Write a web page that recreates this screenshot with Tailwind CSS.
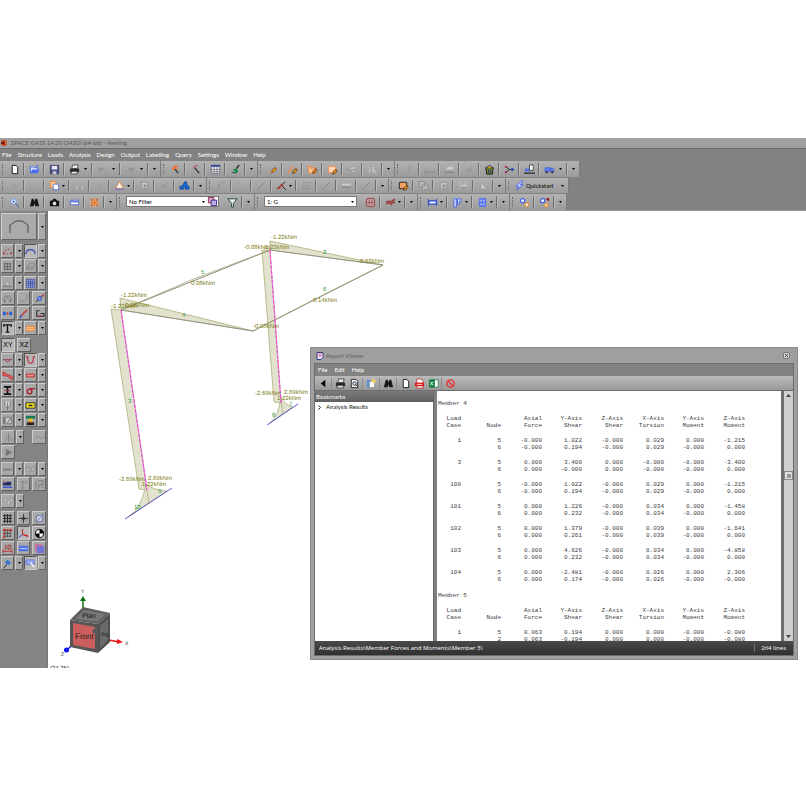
<!DOCTYPE html>
<html lang="en">
<head>
    <meta charset="UTF-8">
    <meta name="viewport" content="width=device-width, initial-scale=1.0">
    <title>SPACE GASS 14.20 - Awning</title>
    <script src="https://cdn.jsdelivr.net/npm/@tailwindcss/browser@4"></script>
</head>
<body class="bg-white h-screen py-[138px] font-['Lato','Noto_Sans',sans-serif] text-[6px] leading-[8px] text-black">

<div class="flex flex-col h-full relative overflow-hidden bg-[#828282]">
    <!-- Title bar -->
    <header class="flex items-center h-[11px] shrink-0 bg-[#a0a0a0] border-b border-[#6c6c6c] text-[#5c5c5c]">
        <svg class="w-[8px] h-[8px] mr-[3px]" viewBox="0 0 8 8"><circle cx="4" cy="4" r="3" fill="#c43c14"/><path d="M1 3h4v2H1z" fill="#7c1d0c"/><path d="M5 2l2 2-2 1z" fill="#f08b50"/></svg>
        <h1>SPACE GASS 14.20 (3420) (64-bit) - Awning</h1>
    </header>

    <!-- Menu -->
    <nav class="flex items-center gap-[6px] h-[12px] shrink-0 px-[2px] text-white">
        <button>File</button>
        <button>Structure</button>
        <button>Loads</button>
        <button>Analysis</button>
        <button>Design</button>
        <button>Output</button>
        <button>Labelling</button>
        <button>Query</button>
        <button>Settings</button>
        <button>Window</button>
        <button>Help</button>
    </nav>

    <!-- Toolbars -->
    <div class="flex flex-col items-start shrink-0 gap-px border-b border-[#999]">
        <div id="bar1" role="toolbar" aria-label="File and structure" class="flex h-[16px] bg-linear-to-b from-[#b2b2b2] to-[#9b9b9b]"></div>
        <div id="bar2" role="toolbar" aria-label="Edit" class="flex h-[15px] bg-linear-to-b from-[#b2b2b2] to-[#9b9b9b]"></div>
        <div id="bar3" role="toolbar" aria-label="View and filter" class="flex h-[16px] bg-linear-to-b from-[#b2b2b2] to-[#9b9b9b]"></div>
    </div>

    <main class="flex flex-1 min-h-0">
        <!-- Tool palette -->
        <aside class="w-[48px] shrink-0 bg-[#848484] border-r border-[#777] px-px pt-[2px]">
            <div class="flex gap-px mb-[4px]">
                <button aria-label="Portal frame" class="flex items-center justify-center w-[36px] h-[27px] bg-[#aaa] border border-t-[#d0d0d0] border-l-[#d0d0d0] border-r-[#666] border-b-[#666]">
                    <svg class="w-[20px] h-[14px]" viewBox="0 0 20 14"><path d="M1 13V5l6-4h6l6 4v8" fill="none" stroke="#4a4a4a"/></svg>
                </button>
                <button aria-label="More shapes" class="flex items-center justify-center w-[8px] h-[27px] bg-[#aaa] border border-t-[#d0d0d0] border-l-[#d0d0d0] border-r-[#666] border-b-[#666]">
                    <svg class="w-[3px] h-[2px]" viewBox="0 0 3 2"><path d="M0 0h3L1.500 2z"/></svg>
                </button>
            </div>
            <div id="palette"></div>
        </aside>

        <!-- Model view -->
        <section class="relative flex-1 min-w-0 bg-white overflow-hidden" aria-label="Model view">
            <svg class="block w-[354px] h-[457px] font-['Liberation_Sans',sans-serif]" viewBox="48 211 354 457" text-rendering="geometricPrecision">
                <!-- moment diagrams -->
                <g fill="#e2e2cf" stroke="#a5a56c" stroke-width=".7">
                    <path d="M262 250h8l11 153-7-1z"/>
                    <path d="M270 250v-9l113 24z"/>
                    <path d="M111 309l10 1 26 180-8-1z"/>
                    <path d="M121 310l-1-12 133 33z"/>
                    <path d="M281 397q-2 18-11 26l23-16q-8-2-12-10z"/>
                    <path d="M146 484q-4 24-18 33l39-26q-14-1-21-7z"/>
                    <path d="M281 400l2 14M146 486l3 17"/>
                </g>
                <!-- members -->
                <g fill="none" stroke="#8a8a86" stroke-width=".8">
                    <path d="M121 310l132 21M270 250l113 15"/>
                    <path d="M121 310l149-60M383 265l-130 66" stroke="#6c6c54"/>
                    <path d="M121 310l75-32 74-28M253 331l66-34 64-32" stroke="#a0a070" stroke-width=".7"/>
                </g>
                <path d="M121 310l26 180M270 250l11 153" stroke="#f04ae0" stroke-width="1.200" stroke-dasharray="4 1"/>
                <path d="M125 519l47-31M267 425l31-21" stroke="#4a4ad0" stroke-width=".9"/>
                <!-- values -->
                <g font-size="6" fill="#7c7c10">
                    <text x="271" y="239">-1.22kNm</text>
                    <text x="244" y="249">-0.08kNm</text>
                    <text x="263" y="249">-1.22kNm</text>
                    <text x="358" y="263">-0.03kNm</text>
                    <text x="191" y="285">0.08kNm</text>
                    <text x="313" y="302">0.14kNm</text>
                    <text x="121" y="297">-1.22kNm</text>
                    <text x="111" y="308">-1.22kNm</text>
                    <text x="125" y="307">0.08kNm</text>
                    <text x="253" y="328">-0.03kNm</text>
                    <text x="255" y="395">-2.69kNm</text>
                    <text x="284" y="394">2.69kNm</text>
                    <text x="277" y="400">1.22kNm</text>
                    <text x="119" y="481">-2.69kNm</text>
                    <text x="148" y="480">2.69kNm</text>
                    <text x="142" y="486">1.22kNm</text>
                </g>
                <!-- member numbers -->
                <g font-size="6" fill="#1c9440">
                    <text x="323" y="254">2</text>
                    <text x="201" y="274">5</text>
                    <text x="323" y="291">6</text>
                    <text x="182" y="317">4</text>
                    <text x="128" y="403">3</text>
                    <text x="289" y="406">7</text>
                    <text x="272" y="417">8</text>
                    <text x="158" y="493">9</text>
                    <text x="134" y="509">10</text>
                </g>
                <!-- view cube -->
                <path d="M83 608v-8" stroke="#107010" stroke-width="1.500"/><path d="M80 601l3-5 3 5z" fill="#107010"/>
                <path d="M109 640l10 2" stroke="#f01010" stroke-width="1.500"/><path d="M117 639l6 3-6 2z" fill="#f01010"/>
                <path d="M71 646l-4 4" stroke="#1010f0" stroke-width="1.500"/><circle cx="66.500" cy="650" r="2.500" fill="#1010f0"/>
                <path d="M70 620l28 4v29l-28-6z" fill="#555"/>
                <path d="M70 620l13-13 27 6-12 11z" fill="#5e5e5e"/>
                <path d="M98 624l12-11v29l-12 11z" fill="#505050"/>
                <path d="M75 619l9-9 22 4-9 8z" fill="#777"/>
                <path d="M100 626l8-7v21l-8 8z" fill="#6a6a6a"/>
                <path d="M73 623l22 4v22l-22-4z" fill="#cb5f5f"/>
                <circle cx="95" cy="631" r="2.500" fill="#555" stroke="#777" stroke-width=".5"/>
                <text x="75" y="639" font-size="8" fill="#1c1c1c">Front</text>
                <text x="82" y="618" font-size="7" fill="#1c1c1c">Plan</text>
                <text x="101" y="636" font-size="5" fill="#1c1c1c">Rig</text>
                <g font-size="5" fill="#222">
                    <text x="81" y="593">Y</text>
                    <text x="125" y="645">X</text>
                    <text x="61" y="656">Z</text>
                </g>
                <text x="50" y="670" font-size="6" fill="#222">(24,25)</text>
            </svg>
        </section>
    </main>

    <!-- Report viewer window -->
    <section aria-label="Report Viewer" class="absolute left-[310px] right-[8px] top-[209px] bottom-[8px] flex flex-col bg-[#9f9f9f] border border-[#8a8a8a] px-[3px] pb-[3px]">
        <div class="flex items-center justify-between h-[15px] shrink-0 px-[2px] text-[#666]">
            <div class="flex items-center gap-[2px]">
                <svg class="w-[8px] h-[8px]" viewBox="0 0 8 8"><path d="M1 .5h6v5l-2 2H1z" fill="#e4e4fa" stroke="#3c3c78"/><path d="M2.500 2h3M2.500 4h3" stroke="#d65a80"/></svg>
                <h2>Report Viewer</h2>
            </div>
            <button aria-label="Close" class="mr-[2px]">
                <svg class="w-[7px] h-[7px]" viewBox="0 0 7 7"><rect x=".5" y=".5" width="6" height="6" rx="1.500" fill="#ddd" stroke="#777"/><path d="M2 2l3 3M5 2L2 5" stroke="#333"/></svg>
            </button>
        </div>
        <div class="flex flex-col flex-1 min-h-0 border border-[#6c6c6c]">
            <nav class="flex items-center gap-[7px] h-[12px] shrink-0 px-[3px] bg-[#828282] text-white">
                <button>File</button>
                <button>Edit</button>
                <button>Help</button>
            </nav>
            <div id="reportBar" role="toolbar" aria-label="Report" class="flex items-center h-[15px] shrink-0 px-px bg-linear-to-b from-[#bababa] to-[#999] border-b border-[#6c6c6c]"></div>
            <div class="flex flex-1 min-h-0">
                <div class="flex flex-col w-[118px] shrink-0 bg-white">
                    <h3 class="h-[11px] px-px leading-[11px] text-white bg-linear-to-b from-[#7c7c7c] to-[#606060]">Bookmarks</h3>
                    <button class="flex items-center gap-[4px] h-[10px] px-[3px] text-[#222]">
                        <svg class="w-[4px] h-[5px]" viewBox="0 0 4 5"><path d="M.5 .5l2 2-2 2" fill="none" stroke="#222"/></svg>
                        Analysis Results
                    </button>
                </div>
                <div class="w-[4px] shrink-0 bg-[#808080] border-l border-[#666]"></div>
                <div id="report" class="flex-1 min-w-0 overflow-hidden bg-white pl-px pt-[9px] font-['Liberation_Mono',monospace] leading-[7px] text-[#3c3c3c]"></div>
                <div class="w-[3px] shrink-0 bg-[#6e6e6e]"></div>
                <div class="relative flex flex-col justify-between items-center w-[9px] shrink-0 bg-[#cfcfcf] py-[3px]">
                    <svg class="w-[5px] h-[3px]" viewBox="0 0 5 3"><path d="M0 3h5L2.500 0z" fill="#444"/></svg>
                    <div class="absolute top-[80px] left-0 flex items-center justify-center w-[9px] h-[9px] bg-[#ddd] border border-[#888]">
                        <div class="w-[4px] h-[4px] bg-[#999]"></div>
                    </div>
                    <svg class="w-[5px] h-[3px]" viewBox="0 0 5 3"><path d="M0 0h5L2.500 3z" fill="#444"/></svg>
                </div>
            </div>
            <footer class="flex items-center justify-between h-[14px] shrink-0 pl-[4px] pr-[7px] bg-linear-to-b from-[#4a4a4a] to-[#303030] text-white font-['Open_Sans','Noto_Sans',sans-serif]">
                <span>Analysis Results\Member Forces and Moments\Member 3\</span>
                <span class="border-l border-[#707070] pl-[6px]">264 lines</span>
            </footer>
        </div>
    </section>
</div>

<script>
    // All icons are drawn on a 12 x 12 grid
    const icons = {
        page: '<path d="M3.500 1.500h4l2 2v7h-6z" fill="#fff" stroke="#111"/>',
        open: '<path d="M1.500 10V3h3l1 1h4v2" fill="#dbe6ff" stroke="#4668e8"/><path d="M1.500 10l2-4h8l-2 4z" fill="#4a70f0"/><path d="M7 2l3-1v2z" fill="#4668e8"/>',
        save: '<path d="M1.500 1.500h9v9h-9z" fill="#4a5290" stroke="#3c3c5c"/><path d="M3 2h6v4H3z" fill="#e8e8f4"/><path d="M4 8h4v3H4z" fill="#c8c8d8"/>',
        print: '<path d="M4 1h6L9 5H3z" fill="#e8e8e8" stroke="#222" stroke-width=".7"/><path d="M1 5h10v4H1z" fill="#2a2a2a"/><path d="M3 8h6v3H2z" fill="#ddd" stroke="#222" stroke-width=".7"/>',
        undo: '<path d="M3 4v3h3M3 6q3-3 6 1" fill="none" stroke="#888"/>',
        redo: '<path d="M9 4v3H6M9 6q-3-3-6 1" fill="none" stroke="#888"/>',
        wandA: '<path d="M5 5l4 5" stroke="#333" stroke-width="1.500"/><path d="M2 5l3-3 5 0-4 2-2 3z" fill="#f07020"/><path d="M6 4l3 2" stroke="#f08060" stroke-width="1.500"/>',
        wandB: '<path d="M5 4l5 6" stroke="#333" stroke-width="1.500"/><path d="M3 5l2-3h4" fill="none" stroke="#d04060"/>',
        table: '<path d="M1.500 1.500h9v9h-9zM4.500 3v8M7.500 3v8M1 6h10M1 8.500h10" fill="#e4e4e4" stroke="#667" stroke-width=".7"/><path d="M1 1h10v2H1z" fill="#30409a"/>',
        brush: '<path d="M10 1L7 5" stroke="#222" stroke-width="1.500"/><path d="M3 6l4-1 2 3-2 2z" fill="#1a8a4c"/><path d="M2 9l5 1" stroke="#155c38"/>',
        pencil: '<path d="M5 9l1-3 3-2 1 2-3 3z" fill="#f0a020" stroke="#6a3010" stroke-width=".7"/><path d="M2 9h2" stroke="#f08848"/><path d="M9 4l1 1" stroke="#c02020"/>',
        memberPen: '<path d="M1 10l6-8" stroke="#f08848" stroke-width="1.500"/><path d="M6 10l1-3 3-2 1 2-3 3z" fill="#d89818" stroke="#5a2010" stroke-width=".8"/>',
        platePen: '<path d="M1 3l3-1v3l5-1v6H2z" fill="#ffc8a0" stroke="#f08040"/><path d="M6 10l1-3 3-2 1 2-3 3z" fill="#d89818" stroke="#5a2010" stroke-width=".8"/>',
        boxPen: '<path d="M1.500 2.500h8v7h-8z" fill="#ffd4b4" stroke="#f08a50"/><path d="M6 11l1-3 3-2 1 2-3 3z" fill="#d89818" stroke="#5a2010" stroke-width=".8"/>',
        darkPen: '<path d="M1.500 2.500h8v7h-8z" fill="#f0a468" stroke="#222"/><path d="M6 11l1-3 3-2 1 2-3 3z" fill="#d89818" stroke="#5a2010" stroke-width=".8"/>',
        gPlate: '<path d="M1 6l4-3h6L9 6zM5 7l5-1-3 4z" fill="#c4c4c4" stroke="#949494" stroke-width=".7"/>',
        gGrid: '<path d="M3 2v8M7 2v8M3 5l4-3M3 9l7-7M7 6l3 4" stroke="#ccc"/><path d="M4 2v8M2 3h8" stroke="#949494" stroke-width=".7"/>',
        gDot: '<path d="M6 2v6M5 5h2" stroke="#929292"/>',
        gLine: '<path d="M1 9h10M1 7v3M11 7v3" stroke="#808080" stroke-width=".8"/>',
        gSlab: '<path d="M2 6h8V3H4z" fill="#ccc"/><path d="M1 9h10" stroke="#888" stroke-width="1.500"/>',
        gBent: '<path d="M3 9V6h4l2-4M5 8h4" fill="none" stroke="#8c8c8c" stroke-width=".8"/>',
        gMove: '<path d="M6 3v6M3 6h6" stroke="#9a9a9a" stroke-width=".8"/>',
        gRot: '<path d="M3 4q0 5 3 5t3-5" fill="none" stroke="#999" stroke-width=".8"/>',
        gMirror: '<path d="M1 10l3-7v7zM11 10L8 3v7z" fill="#ccc" stroke="#999" stroke-width=".6"/>',
        gArc: '<path d="M2 10q1-8 8-8" fill="none" stroke="#888"/>',
        gDots: '<path d="M2 3h8M2 6h8M2 9h8" stroke="#888" stroke-dasharray="2 1"/>',
        gCurve: '<path d="M2 2q0 7 8 8" fill="none" stroke="#909090" stroke-dasharray="2 1"/>',
        gDiag: '<path d="M2 10l8-8" stroke="#808080"/>',
        gBars: '<path d="M1 5h10" stroke="#ccc" stroke-width="2"/><path d="M1 8h10" stroke="#888" stroke-width="1.500"/>',
        gBox: '<path d="M2.500 2.500h7v7h-7z" fill="#c8c8c8" stroke="#8e8e8e"/><path d="M5 5h3v3H5z" fill="#8a8a8a"/>',
        gCopy: '<path d="M1.500 1.500h6v6h-6zM4.500 4.500h6v6h-6z" fill="#c0c0c0" stroke="#8a8a8a"/>',
        gBurst: '<path d="M2 2l8 8M10 2L2 10M1 6h10" stroke="#c8c8c8"/><path d="M3 9h6" stroke="#888"/>',
        gTri: '<path d="M3 2v8h7z" fill="#c8c8c8" stroke="#8a8a8a" stroke-width=".6"/>',
        trash: '<path d="M2 4h8l-1 7H3z" fill="#7a8a30" stroke="#111"/><path d="M3 4q3-5 6 0" fill="#d8b020" stroke="#223080"/><path d="M5 6v4M7 6v4" stroke="#203070"/>',
        nodes: '<path d="M2 3l4 3-4 3M6 6h4" fill="none" stroke="#222"/><path d="M1 2h2v2H1zM1 8h2v2H1z" fill="#c02060"/><path d="M9 4l2 2-2 2-2-2z" fill="#2038c0"/>',
        rail: '<path d="M1 5h6v3H1z" fill="#5070e8"/><path d="M6 1h4v6H6z" fill="#fff" stroke="#222" stroke-width=".8"/><path d="M0 10h12" stroke="#333" stroke-width="1.500"/>',
        truck: '<path d="M1 4h6v4H1zM7 5h3l1 2v1H7z" fill="#6080f8" stroke="#3450d0" stroke-width=".6"/><circle cx="3" cy="9" r="1.200" fill="#223"/><circle cx="9" cy="9" r="1.200" fill="#223"/>',
        copy: '<path d="M1.500 1.500h6v7h-6z" fill="#ffc898" stroke="#f08030"/><path d="M4.500 4.500h6v6h-6z" fill="#fff" stroke="#6078d8"/>',
        tri: '<path d="M6 2l4 7H2z" fill="#fff" stroke="#f09040"/><path d="M1 10h10" stroke="#5068e0"/>',
        boat: '<path d="M1 7l3-1 2-4h2l1 4 2 1v3H7V8H5v2H1z" fill="#1668d8" stroke="#123c88" stroke-width=".7"/>',
        cross: '<path d="M1 10l9-8M6 6l5 5" stroke="#222"/><path d="M2 8l3 1M5 5l3 2" stroke="#d02020" stroke-width="1.500"/>',
        bolt: '<path d="M8 1L2 7h3l-2 4 7-6H7l3-4z" fill="#c0d0ff" stroke="#4060f0" stroke-width=".9"/>',
        zoom: '<circle cx="5" cy="5" r="3" fill="#d8e6ff" stroke="#7898e0"/><path d="M7 7l4 4M5 4v2M4 5h2" stroke="#3050a8"/>',
        find: '<path d="M3 2h2l1 3 1-3h2l2 8H7L6 7l-1 3H1z" fill="#181818"/>',
        camera: '<path d="M1 4h2l2-2h2l2 2h2v6H1z" fill="#101010"/><circle cx="6" cy="7" r="2" fill="#ddd"/>',
        ruler: '<path d="M1.500 3.500h9v5h-9z" fill="#fff" stroke="#5068c8"/><path d="M2 4h8v2H2z" fill="#6880e0"/>',
        fit: '<path d="M1 1h10v10H1z" fill="#d8a888"/><path d="M6 2v8M2 6h8" stroke="#f07820" stroke-width="1.500"/><path d="M2 2h2v2H2zM8 2h2v2H8zM2 8h2v2H2zM8 8h2v2H8z" fill="#8c7060"/>',
        stack: '<path d="M1.500 1.500h6v6h-6z" fill="#d8a8c0" stroke="#902050"/><path d="M4.500 4.500h6v6h-6z" fill="#b8b0e8" stroke="#402080"/>',
        funnel: '<path d="M1 2h10L7 7v4H5V7z" fill="#e0f0ee" stroke="#1c3c3c"/>',
        lattice: '<rect x="1.500" y="1.500" width="9" height="9" rx="2" fill="#c4a4a4" stroke="#903838"/><path d="M4.500 3v6M7.500 3v6M3 6h6" stroke="#903838" stroke-width=".7"/>',
        gun: '<path d="M1 5l4-1 1 1 4-3 1 1-2 2 2 1-3 1-1 2-2-2-3 1z" fill="#a84848" stroke="#803030" stroke-width=".5"/>',
        span: '<path d="M2 4h8v4H2z" fill="#98b0ff" stroke="#3048c8"/><path d="M1.500 2v8M10.500 2v8" stroke="#3048c8"/><path d="M3 6h6" stroke="#fff"/>',
        column: '<path d="M2 2h3v9H2zM6 2h4v3H8v3H6z" fill="#b8ccff" stroke="#3c58e0" stroke-width=".8"/>',
        door: '<path d="M3 1h6l1 1v8l-1 1H3l-1-1V2z" fill="#5874f0"/><path d="M4 3h1v2H4zM7 3h1v2H7zM4 7h1v2H4zM7 7h1v2H7z" fill="#fff"/>',
        gears: '<circle cx="4" cy="4" r="2.200" fill="#fff" stroke="#4060e0" stroke-width="1.300"/><circle cx="8.500" cy="8.500" r="2" fill="#fff" stroke="#f09030" stroke-width="1.300"/>',
        gearsRed: '<circle cx="4" cy="4" r="2.200" fill="#fff" stroke="#4060e0" stroke-width="1.300"/><circle cx="8" cy="9" r="1.800" fill="#fff" stroke="#f09030" stroke-width="1.300"/><path d="M7 2l4-1v4z" fill="#901818"/>',
        supports: '<path d="M1 7h2v2H1zM9 7h2v2H9zM3 4h1v2H3zM6 3h2v1H6zM5 8h1v1H5z" fill="#c03030"/>',
        arch: '<path d="M1 9q0-5 5-5t5 5" fill="none" stroke="#3048b0" stroke-width="1.200"/>',
        grid9: '<path d="M2 3h8M2 6h8M2 9h8M3 2v8M6 2v8M9 2v8" stroke="#666"/>',
        para: '<path d="M4 3h7L8 9H1zM2 7h8" fill="none" stroke="#808080" stroke-width=".8"/>',
        truss: '<path d="M3 8l3-5 3 5z" fill="#ccc" stroke="#888" stroke-width=".7"/><path d="M1 9.500h10" stroke="#777"/>',
        blueGrid: '<path d="M1.500 1.500h9v9h-9zM4 2v8M6 2v8M8 2v8M2 4h8M2 6h8M2 8h8" fill="#a0b0e8" stroke="#304090" stroke-width=".7"/>',
        hook: '<path d="M1 9h6q3 0 3-7" fill="none" stroke="#888"/>',
        people: '<path d="M1 8q1-5 5-5t5 5" fill="none" stroke="#808080"/><path d="M2 7h2v3H2zM5 4h2v2H5zM8 7h2v3H8z" fill="#777"/>',
        pin: '<path d="M2 10l8-8" stroke="#333"/><circle cx="6" cy="6" r="2" fill="#88a4ff" stroke="#2040c8"/><path d="M8 3l3-2-1 3z" fill="#c02020"/>',
        link: '<path d="M1 4h3v4H1zM8 4h3v4H8z" fill="#2060d8"/><path d="M5 6h2M6 5v2" stroke="#c02020" stroke-width="1.200"/>',
        redDiag: '<path d="M3 9l7-7" stroke="#c83038" stroke-width="1.500"/><path d="M2 11l2-3" stroke="#2848c0" stroke-width="1.500"/>',
        crane: '<path d="M6 3H3v6h8V6H7" fill="none" stroke="#303030" stroke-width="1.200"/><path d="M5 9h4" stroke="#c02020"/>',
        tee: '<path d="M2 4V2h8v2M6 2v8M4 10h4" fill="none" stroke="#111" stroke-width="1.500"/>',
        deck: '<path d="M1 3h10v6H1z" fill="#f09040"/><path d="M2 5h8" stroke="#fff" stroke-dasharray="1 1"/><path d="M2 7h8" stroke="#ffd8b8"/>',
        sag: '<path d="M1 5h10M3 5q3 5 6 0" fill="#c89090" stroke="#8c4040" stroke-width=".9"/>',
        moment: '<path d="M1 2h2v2q0 5 3 5t3-5V2h2" fill="none" stroke="#b82838" stroke-width="1.200"/>',
        shear: '<path d="M1 2v4l5 1 5 4V7L6 5z" fill="#e06060" stroke="#b82828" stroke-width=".8"/>',
        axial: '<path d="M1.500 4.500h9v3h-9z" fill="#f09090" stroke="#c02828"/>',
        ibeam: '<path d="M2 2h8M2 10h8M6 2v8" stroke="#111" stroke-width="1.800"/><path d="M3 6h6" stroke="#b02020"/>',
        sigma: '<circle cx="5" cy="7" r="2.500" fill="none" stroke="#a82030" stroke-width="1.500"/><path d="M5 4h6" stroke="#a82030" stroke-width="1.500"/>',
        vee: '<path d="M3 2v4l3 3 3-3V2M6 3v8" fill="#ccc" stroke="#777"/>',
        yellow: '<path d="M1 3h10v6H1z" fill="#e8d820" stroke="#333"/><path d="M4 6h4" stroke="#222" stroke-width="1.500"/>',
        half: '<path d="M1.500 2.500h9v7h-9z" fill="#ccc" stroke="#777"/><path d="M2 9V3h2v6zM5 9l4-6 1 1-4 5z" fill="#777"/>',
        colorI: '<path d="M1 1h10v3H1z" fill="#187858"/><path d="M4 4h4v4H4z" fill="#e0c820"/><path d="M2 8h8v3H2z" fill="#202020"/><path d="M4 7l4 2" stroke="#c02020"/>',
        flame: '<path d="M6 1v10M3 10q0-5 3-5t3 5" fill="none" stroke="#808080"/>',
        wave: '<path d="M1 7q3-4 5-1t5-1" fill="none" stroke="#808080"/>',
        play: '<path d="M3 2l7 4-7 4z" fill="#777"/>',
        bar: '<path d="M1 6h10" stroke="#808080" stroke-width="2"/>',
        butterfly: '<path d="M1 3q4 0 5 4 1-4 5-4 0 5-3 5-1 0-2-1-1 1-2 1-3 0-3-5z" fill="#bbb" stroke="#808080" stroke-width=".8"/>',
        car: '<path d="M1 4h3l1-1h5v4H1z" fill="#283060"/><path d="M1 3h2" stroke="#c02020"/><path d="M1 9h10" stroke="#3858d8" stroke-width="1.500"/>',
        gI: '<path d="M3 3h4M3 10h4M5 3v7M9 2v3" stroke="#808080"/>',
        gF: '<path d="M2 2v9M4 2h6v4H5v5M8 7l2 3" fill="none" stroke="#777"/>',
        rabbit: '<path d="M1 3h3v2h4V3h3v3H9L7 9H5L3 6H1z" fill="#ccc" stroke="#888" stroke-width=".6"/><path d="M4 6h1v1H4zM7 6h1v1H7z" fill="#666"/>',
        bigGrid: '<path d="M1 3h10M1 6h10M1 9h10M3 1v10M6 1v10M9 1v10" stroke="#222"/>',
        star: '<path d="M6 1v10M1 6h10" stroke="#333"/><path d="M4 4l4 4M8 4L4 8" stroke="#333" stroke-width=".8"/>',
        plane: '<path d="M3 3l7-1-1 7-7 1zM3 9l6-6" fill="#d0d4e8" stroke="#505a90" stroke-width=".8"/>',
        redGrid: '<path d="M2 3h8M2 6h8M2 9h8M3 2v8M6 2v8M9 2v8" stroke="#333" stroke-width=".7"/><path d="M1 1h3v2H1zM5 1h2v2H5zM8 1h3v2H8zM1 5h2v2H1zM1 9h2v2H1z" fill="#c83030"/>',
        axes: '<path d="M5 1v6" stroke="#c02020"/><path d="M5 7l6 2" stroke="#d02020" stroke-width="1.500"/><path d="M5 7l-4 3" stroke="#2040d0"/>',
        target: '<circle cx="6" cy="6" r="4.500" fill="#fff" stroke="#000"/><path d="M6 6V1.500A4.500 4.500 0 0 1 10.500 6zM6 6v4.500A4.500 4.500 0 0 1 1.500 6z"/>',
        dim: '<path d="M1 9h10M1 7v4M11 7v4" stroke="#c82828"/><path d="M4 2v5M6.500 2.500h3v4h-3z" fill="none" stroke="#a02828"/>',
        tag: '<path d="M1 3h10v6H1z" fill="#5070e8"/><path d="M2 6h8" stroke="#c8d4ff"/>',
        squares: '<path d="M1 1h8v8H1z" fill="#c87898"/><path d="M3 3h8v8H3z" fill="#7474d8"/>',
        push: '<path d="M6 2l4 3-3 3-4-3z" fill="#3878d0"/><path d="M5 7l-3 4" stroke="#222"/>',
        glass: '<path d="M1 2h9v5H1z" fill="#98a8f0" stroke="#5068d8" stroke-width=".7"/><path d="M6 5l4 5" stroke="#fff" stroke-width="1.500"/>',
        back: '<path d="M8 2v8L3 6z" fill="#000"/>',
        preview: '<path d="M2.500 1.500h5l2 2v7h-7z" fill="#fff" stroke="#222"/><circle cx="6" cy="6" r="2" fill="#b8d0f0" stroke="#222" stroke-width=".8"/><path d="M7 7l3 3" stroke="#222"/>',
        export: '<path d="M1 2h5v8H1z" fill="#5890e8"/><path d="M3.500 3.500h6v7h-6z" fill="#fff" stroke="#777" stroke-width=".8"/><path d="M6 1h3l2 3-2 2-3-2z" fill="#f0d068"/>',
        pdf: '<path d="M3 1h5l2 3v7H3z" fill="#fff" stroke="#c02020" stroke-width=".8"/><path d="M1 5h10v4H1z" fill="#d81c1c"/><path d="M3 7h6" stroke="#fff" stroke-width=".8"/>',
        excel: '<path d="M7 2h4v8H7z" fill="#fff" stroke="#188048" stroke-width=".8"/><path d="M1 2l6-1v10l-6-1z" fill="#107c41"/><path d="M2.500 4l3 4M5.500 4l-3 4" stroke="#fff"/>',
        stop: '<circle cx="6" cy="6" r="4" fill="none" stroke="#e83030" stroke-width="1.500"/><path d="M3 3l6 6" stroke="#e83030" stroke-width="1.500"/>',
    };

    const svg = name => `<svg class="w-[11px] h-[11px] shrink-0" viewBox="0 0 12 12">${icons[name]}</svg>`;
    const arrow = '<svg class="w-[3px] h-[2px] shrink-0" viewBox="0 0 3 2"><path d="M0 0h3L1.500 2z"/></svg>';
    const sep = '<span class="w-[2px] my-[2px] bg-[#6c6c6c] border-r border-[#bababa]"></span>';

    // "name" plain button, "name+" with drop-down, "name++" wide drop-down, "|" end of a toolbar, ":" grip
    function tool(item) {
        if (item === ':') return '<span class="w-[5px] px-[2px] py-[3px]"><span class="block h-full border-l border-dotted border-[#666]"></span></span>';
        if (item === '|') return `<button aria-label="Toolbar options" class="flex items-center justify-center w-[12px] border-r border-[#7c7c7c]">${arrow}</button>`;
        if (item[0] === '<') return item;
        const name = item.replace(/\+/g, '');
        if (item.endsWith('++')) return `<button aria-label="${name}" class="flex items-center gap-[4px] w-[26px] pl-[4px]">${svg(name)}${arrow}</button>${sep}`;
        if (item.endsWith('+')) return `<button aria-label="${name}" class="flex items-center gap-[2px] w-[23px] pl-[4px]">${svg(name)}${arrow}</button>${sep}`;
        return `<button aria-label="${name}" class="flex items-center justify-center w-[18px]">${svg(name)}</button>${sep}`;
    }

    const combo = (label, text, extra) => `<span class="flex items-center w-[93px] h-[11px] my-[2px] mx-[4px] bg-white border border-[#777]">
        <select aria-label="${label}" class="flex-1 min-w-0 h-full pl-[2px] appearance-none outline-none"><option>${text}</option></select>
        <span class="mr-[2px] flex">${arrow}</span>${extra}</span>`;

    const bars = {
        bar1: [':', 'page', 'open', 'save', 'print++', 'undo++', 'redo++', '|', ':', 'wandA', 'wandB', 'table', 'brush', '|', ':', 'pencil', 'memberPen', 'platePen', 'boxPen', 'gPlate', 'gGrid', '|', ':', 'gDot', 'gLine', 'gSlab', 'gBent', 'trash', 'nodes', 'rail', 'truck++', '|'],
        bar2: [':', 'gMove', 'gRot', 'copy+', 'gMirror', 'gMove', 'tri+', 'gBox', 'gBent', 'boat', '|', ':', 'gArc', 'gCurve', 'gDiag', 'cross+', 'gDots', 'gDiag', 'gBars', 'gDiag', '|', ':', 'darkPen', 'gCopy', 'gBox', 'gBurst', 'gTri', '|', ':',
            `<button class="flex items-center gap-px w-[46px] pl-[3px]">${svg('bolt')}Quickstart</button>`, '|'],
        bar3: [':', 'zoom', 'find', 'camera', 'ruler', 'fit', '|', ':', combo('Filter', 'No Filter', svg('stack')), 'funnel', '|', ':', combo('Load case', '1: G', ''), 'lattice', 'gun+', '|', ':', 'span+', 'column+', 'door+', '|', ':', 'gears', 'gearsRed', '|'],
    };
    for (const id in bars) document.getElementById(id).innerHTML = bars[id].map(tool).join('');

    document.getElementById('reportBar').innerHTML =
        ['back', '-', 'print', 'preview', '-', 'export', '-', 'find', '-', 'page', 'pdf', 'excel', '-', 'stop'].map(n => n === '-'
            ? '<span class="w-px h-[11px] mx-px bg-[#8a8a8a]"></span>'
            : `<button aria-label="${n}" class="flex items-center justify-center w-[14px]">${svg(n)}</button>`).join('');

    // Palette: groups of rows
    const palette = [
        [['supports', 'v', 'arch', 'v'], ['grid9', 'v', 'para', 'v']],
        [['truss', 'v', 'blueGrid', 'v'], ['people', 'hook', 'pin'], ['link', 'redDiag', 'crane'], ['tee', 'v', 'deck', 'v']],
        [['XY', 'XZ'], ['sag', 'v', 'moment', 'v'], ['shear', 'v', 'axial', 'v'], ['ibeam', 'v', 'sigma', 'v'], ['vee', 'v', 'yellow', 'v'], ['half', 'v', 'colorI', 'v']],
        [['flame', 'v', '', 'wave'], ['play']],
        [['bar', 'v', 'butterfly', 'v'], ['car', 'gI', 'gF']],
        [['rabbit', 'v']],
        [['bigGrid', 'star', 'plane'], ['redGrid', 'axes', 'target'], ['dim', 'tag', 'squares'], ['push', 'v', 'glass', 'v']],
    ];
    const pressed = ['arch', 'tee', 'moment', 'axes', 'glass', 'XY'];

    function paletteButton(n) {
        if (n === '') return '<span class="w-[6px]"></span>';
        const edge = pressed.includes(n)
            ? 'bg-[#b8b8b8] border border-t-[#555] border-l-[#555] border-r-[#ccc] border-b-[#ccc]'
            : 'bg-[#a8a8a8] border border-t-[#ccc] border-l-[#ccc] border-r-[#606060] border-b-[#606060]';
        if (n === 'v') return `<button aria-label="Options" class="flex items-center justify-center w-[8px] h-[14px] ${edge}">${arrow}</button>`;
        const face = icons[n] ? svg(n) : `<span class="text-[7px] font-['Liberation_Sans',sans-serif]">${n}</span>`;
        return `<button aria-label="${n}" class="flex items-center justify-center w-[14px] h-[14px] ${edge}">${face}</button>`;
    }
    document.getElementById('palette').innerHTML = palette.map(group =>
        '<div class="flex flex-col gap-px mb-[3px]">' + group.map(row => {
            const gap = row.includes('v') ? 'gap-px' : 'gap-[2px]';
            return `<div class="flex ${gap}">` + row.map(paletteButton).join('') + '</div>';
        }).join('') + '</div>').join('');

    // Report tables
    const head = [['Load', '', 'Axial', 'Y-Axis', 'Z-Axis', 'X-Axis', 'Y-Axis', 'Z-Axis'],
                  ['Case', 'Node', 'Force', 'Shear', 'Shear', 'Torsion', 'Moment', 'Moment']];
    const members = {
        'Member 4': `1 5 -0.000 1.022 -0.000 0.029 0.000 -1.215
            . 6 -0.000 0.194 -0.000 0.029 -0.000 0.000
            3 5 0.000 3.400 0.000 -0.000 -0.000 -3.400
            . 6 0.000 -0.000 0.000 -0.000 -0.000 0.000
            100 5 -0.000 1.022 -0.000 0.029 0.000 -1.215
            . 6 -0.000 0.194 -0.000 0.029 -0.000 0.000
            101 5 0.000 1.226 -0.000 0.034 0.000 -1.458
            . 6 0.000 0.232 -0.000 0.034 -0.000 0.000
            102 5 0.000 1.379 -0.000 0.039 0.000 -1.641
            . 6 0.000 0.261 -0.000 0.039 -0.000 0.000
            103 5 0.000 4.626 -0.000 0.034 0.000 -4.858
            . 6 0.000 0.232 -0.000 0.034 -0.000 0.000
            104 5 0.000 -2.481 -0.000 0.026 0.000 2.306
            . 6 0.000 0.174 -0.000 0.026 -0.000 -0.000`,
        'Member 5': `1 5 0.063 0.194 0.000 0.000 -0.000 -0.080
            . 2 0.063 -0.194 0.000 0.000 -0.000 -0.080`,
    };
    document.getElementById('report').innerHTML = Object.entries(members).map(([name, text]) => {
        const rows = text.split('\n').map(line => line.trim().split(' '));
        return `<table class="table-fixed w-[307px] mb-px">
            <caption class="text-left h-[15px]">${name}</caption>
            <colgroup><col class="w-[23px]"><col class="w-[40px]"><col class="w-[41px]"><col class="w-[40px]"><col class="w-[41px]"><col class="w-[41px]"><col class="w-[40px]"><col class="w-[41px]"></colgroup>
            <thead>${head.map((r, i) => `<tr class="${i ? 'h-[15px] align-top' : 'h-[7px]'}">` + r.map(c => `<th class="p-0 text-right font-normal">${c}</th>`).join('') + '</tr>').join('')}</thead>
            <tbody>${rows.map((r, i) => `<tr class="${i % 2 ? 'h-[15px] align-top' : 'h-[7px]'}">` + r.map(c => `<td class="p-0 text-right">${c === '.' ? '' : c}</td>`).join('') + '</tr>').join('')}</tbody>
        </table>`;
    }).join('');
</script>
</body>
</html>
